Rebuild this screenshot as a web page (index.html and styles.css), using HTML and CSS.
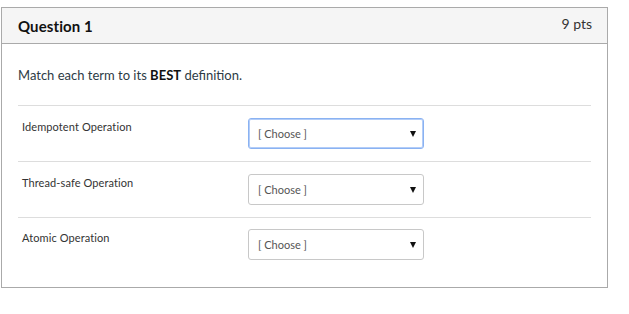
FILE: index.html
```html
<!DOCTYPE html>
<html lang="en">
<head>
  <meta charset="UTF-8" />
  <title>Question 1</title>
  <link rel="stylesheet" href="styles.css">
</head>
<body>

  <div class="question">
    <div class="question-header">
      <span class="question-name">Question 1</span>
      <span class="question-points">9 pts</span>
    </div>

    <div class="question-body">
      <p class="question-text">Match each term to its <strong>BEST</strong> definition.</p>

      <div class="answer-row">
        <div class="answer-label">Idempotent Operation</div>
        <div class="select focused"><select><option>[ Choose ]</option></select></div>
      </div>
      <div class="answer-row">
        <div class="answer-label">Thread-safe Operation</div>
        <div class="select"><select><option>[ Choose ]</option></select></div>
      </div>
      <div class="answer-row">
        <div class="answer-label">Atomic Operation</div>
        <div class="select"><select><option>[ Choose ]</option></select></div>
      </div>
    </div>
  </div>

</body>
</html>
```

FILE: styles.css
```css
body {
  margin: 0;
  padding: 7px 0 0 1px;
  font-family: Lato, "Open Sans", sans-serif;
  color: #2d3b45;
  background: #fff;
}

.question {
  width: 607px;
  box-sizing: border-box;
  border: 1px solid #aaa;
}

.question-header {
  display: flex;
  justify-content: space-between;
  align-items: center;
  height: 35px;
  padding: 0 15px 0 16px;
  background: #f5f5f5;
  border-bottom: 1px solid #aaa;
}

.question-name {
  font-size: 15px;
  font-weight: 700;
  color: #111;
  letter-spacing: 0.1px;
}

.question-points {
  font-size: 14px;
  color: #333;
  margin-top: -4px;
}

.question-body {
  padding: 22px 16px 15px;
}

.question-text {
  margin: 0 0 21px;
  font-size: 13px;
  line-height: 18px;
  color: #2d3b45;
}

.question-text strong {
  color: #111;
}

.answer-row {
  display: flex;
  align-items: flex-start;
  padding: 12px 0;
  border-top: 1px solid #ddd;
}

.answer-row:last-child {
  padding-top: 11px;
}

.answer-label {
  width: 226px;
  padding: 2px 0 0 4px;
  font-size: 11px;
  line-height: 14px;
  color: #333;
  letter-spacing: 0.1px;
}

.select {
  position: relative;
  width: 176px;
  height: 31px;
}

.select select {
  display: block;
  appearance: none;
  width: 100%;
  height: 100%;
  margin: 0;
  padding: 0 0 0 9px;
  font-family: Lato, "Open Sans", sans-serif;
  font-size: 11px;
  color: #555;
  background: #fff;
  border: 1px solid #c8c8c8;
  border-radius: 3px;
}

.select.focused select {
  border-color: #8ab2f2;
  box-shadow: 0 0 0 1px #b3cdf8 inset;
}

.select::after {
  content: "";
  position: absolute;
  right: 8px;
  top: 13px;
  border-left: 3px solid transparent;
  border-right: 3px solid transparent;
  border-top: 6px solid #111;
  pointer-events: none;
}
```
